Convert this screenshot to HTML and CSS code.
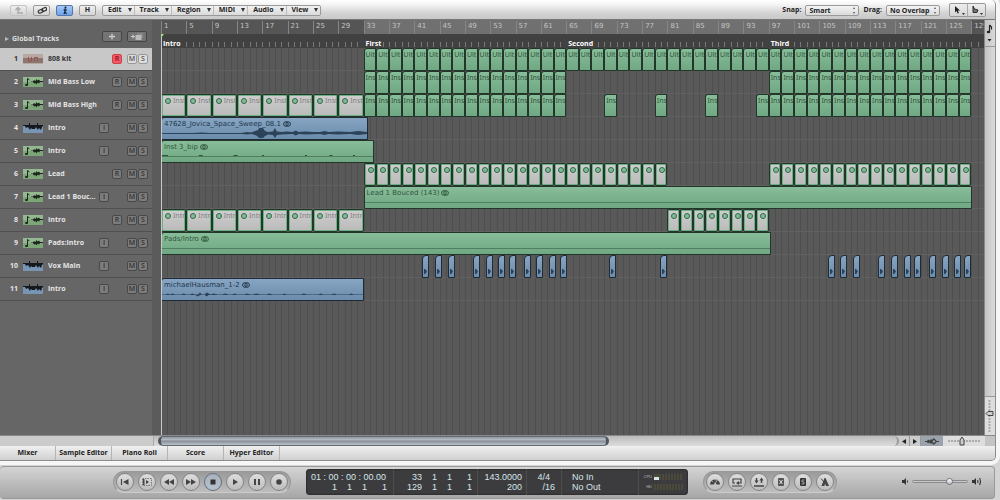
FILE: index.html
```html
<!DOCTYPE html>
<html lang="en">

<head>
  <meta charset="UTF-8" />
  <meta name="viewport" content="width=device-width, initial-scale=1" />
  <title>Arrange</title>
  <link rel="stylesheet" href="styles.css">
</head>

<body>
  <main class="window">
    <header class="toolbar">
      <button class="tool" aria-label="Up one level" disabled>
        <svg width="10" height="9" viewBox="0 0 10 9"><path d="M9 7H4V3M1.500 4L4 1.500 6.500 4" fill="none" stroke="#aaa" stroke-width="1.500" /></svg>
      </button>
      <button class="tool" aria-label="Link">
        <svg width="10" height="9" viewBox="0 0 10 9"><g fill="none" stroke="#333" stroke-width="1.200"><rect x="1" y="4" width="5" height="3" rx="1.500" transform="rotate(-25 3 5)" /><rect x="4.500" y="2" width="5" height="3" rx="1.500" transform="rotate(-25 7 3)" /></g></svg>
      </button>
      <button class="tool active" aria-label="Catch playhead">
        <svg width="10" height="9" viewBox="0 0 10 9"><circle cx="5.500" cy="1.500" r="1" fill="#123" /><path d="M5 2.500V5.500L6.500 8M5 5.500L4 8M3.500 4h3.500" fill="none" stroke="#123" stroke-width="1.200" /></svg>
      </button>
      <button class="tool">H</button>
      <nav class="menus">
        <button>Edit</button>
        <button>Track</button>
        <button>Region</button>
        <button>MIDI</button>
        <button>Audio</button>
        <button>View</button>
      </nav>
      <div class="options">
        <label for="snap">Snap:</label>
        <span class="select"><select id="snap"><option>Smart</option><option>Bar</option></select></span>
        <label for="drag">Drag:</label>
        <span class="select"><select id="drag"><option>No Overlap</option><option>Overlap</option></select></span>
        <div class="pointers">
          <button aria-label="Pointer tool"><svg width="15" height="12" viewBox="0 0 15 12"><path d="M4 2v6.500l1.500-1.500 1.200 2.500 1.200-.6L6.900 6.500H9z" fill="#222" /><path d="M11 9h3l-1.500 2z" fill="#333" /></svg></button>
          <button aria-label="Marquee tool"><svg width="15" height="12" viewBox="0 0 15 12"><path d="M4 2v6.500h4L9 6 5.500 5z" fill="#777" stroke="#222" stroke-width=".9" /><path d="M11 9h3l-1.500 2z" fill="#333" /></svg></button>
        </div>
      </div>
    </header>

    <section class="arrange">
      <aside class="headers">
        <div class="global">
          <button class="disclosure">Global Tracks</button>
          <button class="add" aria-label="Add track"><svg width="16" height="9" viewBox="0 0 16 9"><path d="M8 1.500v6M5 4.500h6" stroke="#ccc" stroke-width="1.300" /></svg></button>
          <button class="add" aria-label="Duplicate track"><svg width="16" height="9" viewBox="0 0 16 9"><path d="M2 4.500h4M4 2.500v4" stroke="#ccc" /><rect x="8" y="1" width="6" height="5" fill="#888" /><rect x="6.500" y="3" width="6" height="5" fill="#bbb" /></svg></button>
        </div>
        <ol class="track-list" id="trackList"></ol>
      </aside>
      <div class="gutter"></div>
      <div class="timeline">
        <div class="ruler" id="ruler"></div>
        <div class="markers" id="markers"></div>
        <div class="lanes" id="lanes"></div>
        <div class="playhead"></div>
      </div>
      <div class="v-scroll">
        <button class="note" aria-label="Note menu"><svg width="9" height="26" viewBox="0 0 9 26"><path d="M4.500 5l2 2v2.500M4.500 5v7" fill="none" stroke="#222" stroke-width="1.200" /><ellipse cx="3.500" cy="12" rx="1.800" ry="1.300" fill="#222" /><path d="M2.500 19h4l-2 2.500z" fill="#222" /></svg></button>
        <div class="v-zoom"><svg width="9" height="38" viewBox="0 0 9 38"><path d="M4.500 3v32" stroke="#aaa" stroke-width="2" stroke-dasharray="2 1" /><path d="M1 16.500L3 14.500h5v4H3z" fill="#ccc" stroke="#444" /></svg></div>
      </div>
    </section>

    <div class="scroll-row">
      <div class="h-scroll"><div class="thumb"></div></div>
      <button class="arrow" aria-label="Scroll left"><svg width="10" height="9" viewBox="0 0 10 9"><path d="M7 2v5L3 4.500z" fill="#222" /></svg></button>
      <button class="arrow" aria-label="Scroll right"><svg width="10" height="9" viewBox="0 0 10 9"><path d="M3 2v5l4-2.500z" fill="#222" /></svg></button>
      <button class="wave-zoom" aria-label="Waveform zoom"><svg width="14" height="9" viewBox="0 0 14 9"><path d="M0 4h2l1-1.500 1.500 1L6 2l1 1 1.500-2L11 3l.500 1H14v1h-2.500L11 6 8.500 8 7 6 6 7 4.500 5.500 3 6.500 2 5H0z" fill="#444" /><circle cx="9" cy="4.500" r="1.200" fill="#9ba4ad" /></svg></button>
      <div class="h-zoom"><svg width="38" height="10" viewBox="0 0 38 10"><path d="M3 5h33" stroke="#aaa" stroke-width="2" stroke-dasharray="2 1" /><path d="M15 9V4l2-3 2 3v5z" fill="#ccc" stroke="#444" /></svg></div>
      <div class="corner"></div>
    </div>

    <nav class="editors">
      <a href="#mixer">Mixer</a>
      <a href="#sample">Sample Editor</a>
      <a href="#piano">Piano Roll</a>
      <a href="#score">Score</a>
      <a href="#hyper">Hyper Editor</a>
    </nav>
  </main>

  <footer class="transport">
    <div class="pill">
      <button aria-label="Go to beginning"><svg viewBox="0 0 16 16"><path d="M4.500 5v6" stroke="#444" stroke-width="1.200" /><path d="M11.500 5v6L6 8z" fill="#444" /></svg></button>
      <button aria-label="Play from selection"><svg viewBox="0 0 16 16"><rect x="3.500" y="4.500" width="9" height="7" fill="none" stroke="#777" stroke-dasharray="1.500 1" /><path d="M7 6v4l3-2zM4 5h1.500v6H4z" fill="#444" /></svg></button>
      <button aria-label="Rewind"><svg viewBox="0 0 16 16"><path d="M8 5v6L3 8zM13 5v6L8 8z" fill="#444" /></svg></button>
      <button aria-label="Forward"><svg viewBox="0 0 16 16"><path d="M3 5v6l5-3zM8 5v6l5-3z" fill="#444" /></svg></button>
      <button class="pressed" aria-label="Stop"><svg viewBox="0 0 16 16"><path d="M5.500 5.500h5v5h-5z" fill="#333" /></svg></button>
      <button aria-label="Play"><svg viewBox="0 0 16 16"><path d="M6 5v6l5-3z" fill="#444" /></svg></button>
      <button aria-label="Pause"><svg viewBox="0 0 16 16"><path d="M5 5h2v6H5zM9 5h2v6H9z" fill="#444" /></svg></button>
      <button aria-label="Record"><svg viewBox="0 0 16 16"><circle cx="8" cy="8" r="2.800" fill="#444" /></svg></button>
    </div>

    <div class="lcd">
      <div class="position"><span>01 : 00 : 00 : 00.00</span><span class="beats"><b>1</b><b>1</b><b>1</b><b>1</b></span></div>
      <div class="locators"><span class="beats"><b>33</b><b>1</b><b>1</b><b>1</b></span><span class="beats"><b>129</b><b>1</b><b>1</b><b>1</b></span></div>
      <div class="tempo"><span>143.0000</span><span>200</span></div>
      <div class="meter"><span>4/4</span><span>/16</span></div>
      <div class="midi"><span>No In</span><span>No Out</span></div>
      <div class="load"><span>CPU <i class="bar used"></i></span><span>HD <i class="bar"></i></span></div>
    </div>

    <div class="pill">
      <button aria-label="Tuner"><svg viewBox="0 0 16 16"><path d="M3 10.500a5 5 0 1 1 10 0h-3.500L8 8l-1 2.500z" fill="#444" /><path d="M8 10L10.500 5.500M5 7l1 1M8 5v1.500" stroke="#bbb" stroke-width=".8" /></svg></button>
      <button aria-label="Cycle"><svg viewBox="0 0 16 16"><path d="M6 9H4V5h8v4H9M3 12h10" fill="none" stroke="#444" stroke-width="1.200" /><path d="M10 7v4L7 9z" fill="#444" /></svg></button>
      <button aria-label="Autopunch"><svg viewBox="0 0 16 16"><path d="M5.500 4v4M10.500 5v4M3 12h10" stroke="#444" stroke-width="1.400" /><path d="M3.500 6.500h4l-2 3zM8.500 6.500h4l-2-3z" fill="#444" /></svg></button>
      <button aria-label="Replace"><svg viewBox="0 0 16 16"><rect x="5" y="4" width="6" height="8" rx="1" fill="#555" /><path d="M6.500 6l3 4M9.500 6l-3 4" stroke="#ddd" /></svg></button>
      <button aria-label="Solo"><svg viewBox="0 0 16 16"><rect x="5" y="4" width="6" height="8" rx="1" fill="#333" /><path d="M9.500 6H7v2h2v2H6.500" fill="none" stroke="#aaa" stroke-width=".9" /></svg></button>
      <button aria-label="Metronome"><svg viewBox="0 0 16 16"><path d="M8.500 4L12 12H9L8.200 8.500 7.500 12h-3L7.500 4z" fill="#444" /><path d="M4 4.500L9.500 11" stroke="#444" /></svg></button>
    </div>

    <div class="volume">
      <svg width="8" height="9" viewBox="0 0 8 9"><path d="M1 3h2l2-2v7L3 6H1z" fill="#333" /><path d="M6.500 3.500v2" stroke="#333" /></svg>
      <input type="range" aria-label="Master volume" min="0" max="100" value="70">
      <svg width="11" height="9" viewBox="0 0 11 9"><path d="M1 3h2l2-2v7L3 6H1z" fill="#333" /><path d="M6.500 3q1 1.500 0 3M8.500 1q2 3.500 0 7" fill="none" stroke="#333" stroke-width="1.100" /></svg>
    </div>
  </footer>

  <script src="script.js"></script>
</body>

</html>
```
FILE: styles.css
```css
* {
  box-sizing: border-box;
}

html, body {
  height: 100%;
}

body {
  display: flex;
  flex-direction: column;
  margin: 0;
  overflow: hidden;
  background: #d4d4d4;
  color: #222;
  font-family: "Open Sans", "Liberation Sans", sans-serif;
  font-size: 7px;
  line-height: 10px;
}

button, select, input {
  margin: 0;
  padding: 0;
  border: 0;
  background: none;
  color: inherit;
  font: inherit;
}

svg {
  display: block;
}

.window {
  display: flex;
  flex: 1;
  flex-direction: column;
  min-height: 0;
  margin-right: 4px;
  border-right: 1px solid #8c8c8c;
  border-bottom: 1px solid #8c8c8c;
  border-radius: 0 5px 5px 0;
  background: #ccc;
  box-shadow: 0 0 0 4px #f6f6f6;
  overflow: hidden;
}

/* toolbar */
.toolbar {
  display: flex;
  align-items: center;
  height: 20px;
  padding: 1px 9px 0 10px;
  border-bottom: 1px solid #777;
  background: linear-gradient(#fff 0%, #f4f4f4 25%, #d2d2d2 70%, #c9c9c9);
  font-weight: 700;
}

.tool {
  display: flex;
  align-items: center;
  justify-content: center;
  width: 17px;
  height: 11px;
  margin-right: 6px;
  border: 1px solid #999;
  border-radius: 2px;
  background: linear-gradient(#eee, #d4d4d4);
}

.tool:disabled {
  border-color: #c4c4c4;
}

.tool.active {
  border-color: #5577aa;
  background: linear-gradient(#a6c8f4, #6ea4ec);
}

.menus {
  display: flex;
  border: 1px solid #999;
  border-radius: 2px;
  background: linear-gradient(#f2f2f2, #dadada);
}

.menus button {
  display: flex;
  align-items: center;
  gap: 6px;
  height: 9px;
  padding: 0 2px 0 5px;
}

.menus button::after {
  content: "";
  border: 2px solid transparent;
  border-top: 4px solid #333;
  border-bottom: 0;
}

.menus button + button {
  border-left: 1px solid #bbb;
}

.options {
  display: flex;
  align-items: center;
  gap: 4px;
  margin-left: auto;
}

.select {
  position: relative;
  display: flex;
}

.select select {
  width: 54px;
  height: 11px;
  padding-left: 3px;
  appearance: none;
  border: 1px solid #999;
  border-radius: 2px;
  background: linear-gradient(#f4f4f4, #dadada);
}

.select::before, .select::after {
  content: "";
  position: absolute;
  right: 4px;
  top: 2px;
  border: 1px solid transparent;
  border-bottom: 2px solid #555;
  border-top: 0;
}

.select::after {
  top: 7px;
  border-top: 2px solid #555;
  border-bottom: 0;
}

.pointers {
  display: flex;
  margin-left: 5px;
  border: 1px solid #999;
  border-radius: 2px;
  background: linear-gradient(#eee, #d4d4d4);
}

.pointers button {
  padding: 0 1px;
}

.pointers button + button {
  border-left: 1px solid #aaa;
}

/* arrange area */
.arrange {
  display: flex;
  flex: 1;
  min-height: 0;
  background: #666;
}

.headers {
  width: 153px;
  border-right: 1px solid #5a5a5a;
  color: #e4e4e4;
  font-weight: 700;
}

.global {
  display: flex;
  align-items: center;
  gap: 5px;
  height: 28px;
  padding: 4px 5px 0;
  background: #636363;
  color: #ddd;
}

.disclosure {
  display: flex;
  align-items: center;
  gap: 3px;
  margin: 5px auto 0 0;
}

.disclosure::before {
  content: "";
  border: 2px solid transparent;
  border-left: 4px solid #bbb;
  border-right: 0;
}

.add {
  padding: 0 1px;
  border: 1px solid #444;
  border-radius: 2px;
  background: #747474;
}

.track-list {
  margin: 0;
  padding: 0;
  list-style: none;
}

.track {
  display: flex;
  align-items: center;
  height: 23px;
  padding: 0 4px 1px 0;
  border-bottom: 1px solid #505050;
}

.track .number {
  width: 18px;
  margin-right: 5px;
  text-align: right;
}

.track .name {
  flex: 1;
  margin-left: 5px;
  overflow: hidden;
  white-space: nowrap;
}

.track.selected {
  background: #c8c8c8;
  color: #333;
}

.flags {
  display: flex;
  gap: 1px;
}

.flag {
  width: 10px;
  height: 10px;
  border: 1px solid #484848;
  border-radius: 2px;
  background: #7c7c7c;
  color: #333;
  font-weight: 600;
  line-height: 8px;
}

.flag.wide {
  margin-right: 4px;
}

.flag.input {
  margin-right: 17px;
}

.selected .flag {
  border-color: #999;
  background: #ddd;
  color: #555;
}

.selected .flag.armed {
  border-color: #c44;
  background: #f4566c;
  color: #812;
}

.gutter {
  width: 8px;
  background: #5b5b5b;
}

.timeline {
  position: relative;
  display: flex;
  flex: 1;
  flex-direction: column;
  min-width: 0;
  overflow: hidden;
}

.ruler {
  position: relative;
  height: 14px;
  background: #555;
  color: #c4c4c4;
  font-family: "DejaVu Sans", sans-serif;
  line-height: 11px;
}

.cycle {
  position: absolute;
  top: 0;
  bottom: 0;
  background: #707070;
}

.bar-number {
  position: absolute;
  top: 1px;
  height: 26px;
  padding-left: 2px;
  border-left: 1px solid #858585;
}

.markers {
  position: relative;
  height: 14px;
  background: #414141;
  color: #fff;
  font-weight: 700;
}

.markers::before {
  content: "";
  position: absolute;
  inset: 8px 0 1px;
  background: repeating-linear-gradient(90deg, #777 0 1px, transparent 1px calc(100% / 130));
}

.marker {
  position: absolute;
  bottom: 0;
  padding: 0 1px 0 2px;
  background: #414141;
  line-height: 9px;
}

.lanes {
  flex: 1;
  background: repeating-linear-gradient(90deg, #4e4e4e 0 1px, transparent 1px calc(100% / 130)), #595959;
}

.lane {
  position: relative;
  height: 23px;
  border-bottom: 1px solid #606060;
}

.region {
  position: absolute;
  top: 0;
  height: 23px;
  padding: 1px 0 0 2px;
  border: 1px solid #22372a;
  border-radius: 3px 0 0 0;
  background: linear-gradient(#87bd98, #6fa883);
  color: #31543c;
  font-family: "DejaVu Sans", sans-serif;
  white-space: nowrap;
  overflow: hidden;
}

.region.cell, .region.loop {
  font-family: "Noto Sans", sans-serif;
}

.region.cell {
  padding-left: 1px;
}

.region.bounce::after {
  content: "";
  position: absolute;
  left: 0;
  right: 0;
  top: 15px;
  height: 1px;
  background: #4f7f60;
}

.region.audio {
  border-color: #1f2c38;
  background: linear-gradient(#87a5c3, #6b8cab);
  color: #22364a;
}

.region.clip {
  border-radius: 4px 0 0 0;
}

.region.loop {
  display: flex;
  gap: 2px;
  padding-left: 3px;
  border-radius: 2px;
  background: linear-gradient(#cecece, #bababa);
  box-shadow: inset 0 0 0 1px #6bb085;
  color: #808080;
}

.dot {
  flex: none;
  width: 6px;
  height: 6px;
  margin-top: 2px;
  border: 1px solid #38634a;
  border-radius: 50%;
  background: #7fbd97;
}

.stereo {
  display: inline-block;
  margin-left: 2px;
  vertical-align: -1px;
}

.wave {
  position: absolute;
  left: 0;
  top: 0;
  width: 100%;
  height: 21px;
}

.playhead {
  position: absolute;
  left: 0;
  top: 14px;
  bottom: 0;
  width: 1px;
  background: #c8c8c8;
}

.playhead::before {
  content: "";
  position: absolute;
  left: -3px;
  border: 3px solid transparent;
  border-top: 4px solid #a8dc88;
  border-bottom: 0;
}

.v-scroll {
  display: flex;
  flex-direction: column;
  justify-content: space-between;
  width: 11px;
  border-left: 1px solid #888;
  background: linear-gradient(90deg, #c4c4c4, #dadada);
}

.note {
  border-bottom: 1px solid #999;
}

.v-zoom {
  border-top: 1px solid #999;
  background: #ddd;
}

/* scrollbar and editor tabs */
.scroll-row {
  display: flex;
  height: 11px;
  padding-left: 153px;
  border-top: 1px solid #888;
  background: #cbcbcb;
}

.h-scroll {
  flex: 1;
  padding-left: 4px;
  border-left: 1px solid #aaa;
  border-radius: 0 5px 5px 0;
  border-right: 2px solid #999;
  background: linear-gradient(#bbb, #dcdcdc);
}

.thumb {
  width: 61%;
  height: 10px;
  border: 1px solid #626a74;
  border-left: 3px solid #4d5560;
  border-right: 3px solid #4d5560;
  border-radius: 5px;
  background: linear-gradient(#8e969f, #b5bbc2 35%, #858d96 50%, #bcc2c9);
}

.arrow {
  border-right: 1px solid #999;
}

.wave-zoom {
  padding: 0 4px;
  background: #9ba4ad;
}

.h-zoom {
  padding: 0 2px;
  background: #ddd;
}

.corner {
  width: 10px;
  background: #c4c4c4;
}

.editors {
  display: flex;
  height: 14px;
  background: linear-gradient(#f0f0f0, #d0d0d0);
}

.editors a {
  width: 56px;
  border-right: 1px solid #b4b4b4;
  color: #222;
  font-weight: 700;
  line-height: 13px;
  text-align: center;
  text-decoration: none;
}

/* transport */
.transport {
  display: flex;
  align-items: center;
  gap: 15px;
  height: 33px;
  margin: 5px 5px 1px 0;
  padding: 0 2px 2px 113px;
  border: 1px solid #999;
  border-left: 0;
  border-radius: 4px;
  background: linear-gradient(#d4d4d4, #a6a6a6);
}

.pill {
  display: flex;
  gap: 4px;
  padding: 1px 2px;
  border: 1px solid #999;
  border-bottom-color: #ccc;
  border-radius: 11px;
  background: linear-gradient(#9a9a9a, #bebebe);
}

.pill button {
  width: 18px;
  height: 18px;
  border: 1px solid #858585;
  border-radius: 50%;
  background: linear-gradient(#dedede, #bcbcbc);
}

.pill button.pressed {
  border-color: #66707c;
  background: linear-gradient(#a9b2bc, #b6c2ce);
}

.lcd {
  display: flex;
  flex: 0 1 382px;
  height: 26px;
  border-radius: 4px;
  background: #3c3b3d;
  color: #d5e6ea;
  font-family: "Liberation Sans", Arial, sans-serif;
  font-size: 9px;
  white-space: nowrap;
  box-shadow: inset 0 0 2px #111;
}

.lcd > div {
  display: flex;
  flex-direction: column;
  justify-content: center;
  border-right: 1px solid #4d4d4d;
}

.lcd .position {
  width: 88px;
  padding: 0 6px 0 5px;
}

.beats {
  display: grid;
  grid-template-columns: 1fr 15px 15px 20px;
  text-align: right;
}

.beats b {
  font-weight: 400;
}

.lcd .locators {
  width: 84px;
  padding: 0 5px 0 6px;
}

.lcd .tempo {
  width: 49px;
  padding-right: 4px;
  text-align: right;
}

.lcd .meter {
  width: 35px;
  padding-right: 6px;
  text-align: right;
}

.lcd .meter span:first-child {
  padding-right: 5px;
}

.lcd .midi {
  width: 77px;
  padding-left: 10px;
}

.lcd .load {
  flex: 1;
  padding-right: 5px;
  border: 0;
  color: #bbb;
  font-size: 4px;
}

.load span {
  display: flex;
  align-items: center;
  justify-content: flex-end;
  gap: 2px;
}

.load .bar {
  width: 29px;
  height: 6px;
  background: repeating-linear-gradient(90deg, #4b4a3a 0 2px, #3c3b3d 2px 3px);
}

.load .used {
  border-left: 5px solid #4b4a3a;
  border-image: linear-gradient(#4b4a3a 50%, #d5e6ea 50%) 1;
}

.volume {
  display: flex;
  align-items: center;
  gap: 3px;
  margin: 0 10px 0 auto;
}

.volume input {
  width: 56px;
  height: 9px;
  appearance: none;
}

.volume input::-webkit-slider-runnable-track {
  height: 3px;
  border: 1px solid #8a8a8a;
  border-radius: 2px;
  background: #c8c8c8;
}

.volume input::-webkit-slider-thumb {
  width: 7px;
  height: 7px;
  margin-top: -3px;
  appearance: none;
  border: 1px solid #777;
  border-radius: 50%;
  background: linear-gradient(#fff, #b4c0d0);
}
```
FILE: script.js
```js
const BARS = 130;

const markers = [[0, "Intro"], [32, "First"], [64, "Second"], [96, "Third"]];

const waves = {
  sweep: "M0 15H32L40 14.500 48 15H80L86 14 90 14.500 94 13 97 12 98 10 102 10 104 13 107 14 112 13.500 114 10 116 13.500 121 14 126 13.500 132 14 135 12.500 138 14 145 13.500 153 14 160 14 164 13 168 14 178 13.500 190 14 198 13 207 14V16L198 17 190 16 178 16.500 168 16 164 17 160 16 145 16.500 138 16 135 17.500 132 16 121 16.500 116 17 114 20 112 17 107 16.500 104 18 102 20 98 20 96 18 94 17 90 16 86 16.500 80 16H0z",
  bip: "M0 14.500h6M36 14.500h4M70 14.500h4M98 14.500h2M140 14.500h2M164 14.500h3M187 14.500h2",
  hausman: "M0 15.500h4l2-1 2 1 3-1 2 1h7l2-1 3 1h4l2-1 3 1h3l2-2 2 2h3l2-2 4 2 3-1 4 1h5l3-1 3 1h4l3-1 2 1h8l2-1 4 1h3l3-1 4 1h7l2-1 4 1h10l2-1 2 1h15l3-1 3 1h12l2-1 3 1h8l3-1 3 1h12l3-1 2 1h20v.6H48l-2 1.500-2-1.500h-5l-2 1.500-3-1.500H0z"
};

const tracks = [
  { name: "808 kit", icon: "drum", flag: "R", selected: true },
  { name: "Mid Bass Low", icon: "inst", flag: "R" },
  { name: "Mid Bass High", icon: "inst", flag: "R" },
  { name: "Intro", icon: "audio", flag: "I" },
  { name: "Intro", icon: "inst", flag: "I" },
  { name: "Lead", icon: "inst", flag: "R" },
  { name: "Lead 1 Bouc...", icon: "inst", flag: "I" },
  { name: "Intro", icon: "inst", flag: "R" },
  { name: "Pads:Intro", icon: "inst", flag: "I" },
  { name: "Vox Main", icon: "audio", flag: "I" },
  { name: "Intro", icon: "audio", flag: "I" }
];

// one region every `step` bars between two bars
function fill(from, to, step, type, name) {
  const list = [];
  for (let bar = from; bar < to; bar += step) {
    list.push({ start: bar, length: step, type, name });
  }
  return list;
}

const vox = [41.3, 43.3, 45.4, 49.3, 51.3, 53.3, 54.9, 57.3, 59.3, 61.3, 63, 70.8, 78.8,
  105.3, 107.3, 109.3, 113.3, 115.3, 117.3, 118.9, 121.3, 123.3, 125.3, 126.9];

const regions = [
  fill(32, 128, 2, "cell", "Ult"),
  [...fill(32, 64, 2, "cell", "Ins"), ...fill(96, 128, 2, "cell", "Ins")],
  [...fill(0, 32, 4, "loop", "Inst"), ...fill(32, 64, 2, "cell", "Ins"),
    ...[70, 78, 86, 94].map(bar => ({ start: bar, length: 2, type: "cell", name: "Ins" })),
    ...fill(96, 128, 2, "cell", "Ins")],
  [{ start: 0, length: 32.7, type: "audio", name: "47628_Jovica_Space_Sweep_08.1", wave: "sweep" }],
  [{ start: 0, length: 33.7, type: "bounce", name: "Inst 3_bip", wave: "bip" }],
  [...fill(32, 80, 2, "loop", ""), ...fill(96, 128, 2, "loop", "")],
  [{ start: 32, length: 96.1, type: "bounce", name: "Lead 1 Bouced (143)" }],
  [...fill(0, 32, 4, "loop", "Intro"), ...fill(80, 96, 2, "loop", "")],
  [{ start: 0, length: 96.4, type: "bounce", name: "Pads/Intro" }],
  vox.map(bar => ({ start: bar, length: 1.1, type: "audio clip", name: "" })),
  [{ start: 0, length: 32.1, type: "audio", name: "michaelHausman_1-2", wave: "hausman" }]
];

const icons = {
  drum: `<svg width="20" height="10" viewBox="0 0 20 10"><rect width="20" height="10" fill="#b8a8a4"/><path d="M0 4h20v5H0z" fill="#8c7672"/><path d="M5.500 3v4h3V3M11.500 7V3.500h3V7" fill="none" stroke="#96544c"/></svg>`,
  inst: `<svg width="20" height="10" viewBox="0 0 20 10"><rect width="20" height="10" fill="#94b890"/><path d="M0 5h20v5H0z" fill="#7ca678"/><path d="M4.500 8V1.500L6.500 3" fill="none" stroke="#1c241c"/><ellipse cx="3.500" cy="8" rx="1.600" ry="1.100" fill="#1c241c"/><path d="M8 4.500h2l1-1.500 1.500 1 1-2 1 1.500 1.500-1 1 1.500h3v1h-3l-1 1.500-1.500-1-1 2-1-1.500-1.500.5-1-1.500H8z" fill="#1c241c"/></svg>`,
  audio: `<svg width="20" height="10" viewBox="0 0 20 10"><rect width="20" height="10" fill="#7896b4"/><path d="M0 0h20v2H0z" fill="#666"/><path d="M0 2h6V0h1v2h7V0h1v2h5v1l-1 1-1 3-2-2-1 2-2-3-1 2-3 0-1-1-1 2-2-3-2 1-1-2-2 0z" fill="#14191f"/></svg>`
};

const stereo = `<svg class="stereo" width="8" height="6" viewBox="0 0 8 6"><g fill="none" stroke="currentColor"><circle cx="2.900" cy="3" r="2.300"/><circle cx="5.100" cy="3" r="2.300"/></g></svg>`;

const percent = bars => `${(bars / BARS * 100).toFixed(3)}%`;

function trackHeader(track, i) {
  const flagClass = track.flag === "I" ? "input" : track.selected ? "wide armed" : "wide";
  return `<li class="track ${track.selected ? "selected" : ""}">
    <span class="number">${i + 1}</span>${icons[track.icon]}<span class="name">${track.name}</span>
    <span class="flags"><button class="flag ${flagClass}">${track.flag}</button><button class="flag">M</button><button class="flag">S</button></span>
  </li>`;
}

function regionBox(region) {
  let inner = region.name;
  if (region.type === "loop") inner = `<span class="dot"></span>${region.name}`;
  if (region.type === "audio" || region.type === "bounce") inner += stereo;
  if (region.wave) {
    const stroke = region.wave === "bip" ? 'fill="none" stroke="#31543c"' : 'fill="#2c4258"';
    inner += `<svg class="wave" viewBox="0 0 207 21" preserveAspectRatio="none"><path d="${waves[region.wave]}" ${stroke}/></svg>`;
  }
  if (region.type === "audio clip") {
    inner = `<svg class="wave" viewBox="0 0 5 21"><path d="M1 13h1l1 1 1 1.500-1 1.500-1 1H1z" fill="#2c4258"/></svg>`;
  }
  return `<div class="region ${region.type}" style="left:${percent(region.start)};width:${percent(region.length)}">${inner}</div>`;
}

document.getElementById("trackList").innerHTML = tracks.map(trackHeader).join("");
document.getElementById("lanes").innerHTML = regions
  .map(list => `<div class="lane">${list.map(regionBox).join("")}</div>`).join("");

let ruler = `<div class="cycle" style="left:${percent(32)};width:${percent(96)}"></div>`;
for (let bar = 0; bar < BARS; bar += 4) {
  ruler += `<span class="bar-number" style="left:${percent(bar)}">${bar + 1}</span>`;
}
document.getElementById("ruler").innerHTML = ruler;
document.getElementById("markers").innerHTML = markers
  .map(([bar, name]) => `<span class="marker" style="left:${percent(bar)}">${name}</span>`).join("");
```
